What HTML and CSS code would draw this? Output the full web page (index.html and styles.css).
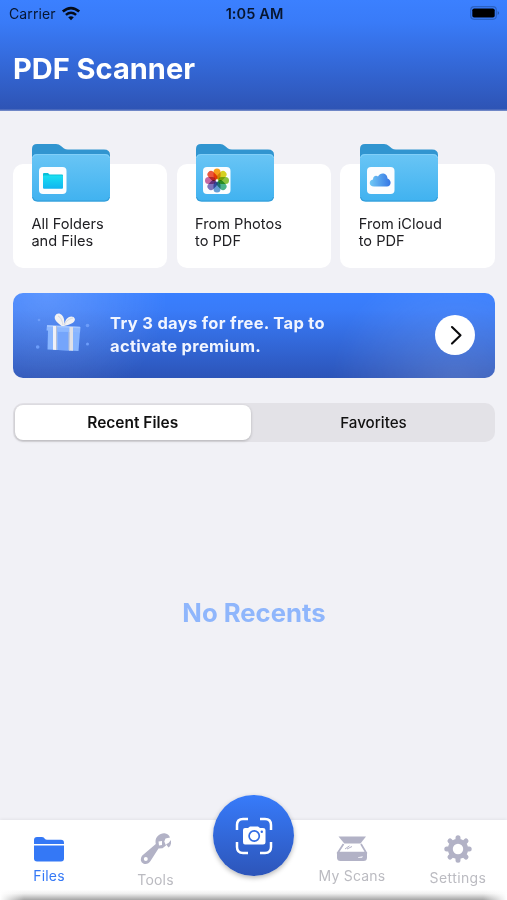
FILE: index.html
```html
<!DOCTYPE html>
<html lang="en">
    <head>
        <meta charset="UTF-8">
        <title>PDF Scanner</title>
        <link rel="stylesheet" href="styles.css">
    </head>
    <body>
        <svg class="definitions" width="0" height="0">
            <defs>
                <linearGradient id="folder-front" x1="0" y1="0" x2="0" y2="1">
                    <stop offset="0" stop-color="#69c5f5"/>
                    <stop offset="1" stop-color="#40b2f0"/>
                </linearGradient>
                <linearGradient id="small-folder" x1="0" y1="0" x2="0" y2="1">
                    <stop offset="0" stop-color="#18e0f2"/>
                    <stop offset="1" stop-color="#12b4f0"/>
                </linearGradient>
                <linearGradient id="cloud" x1="0" y1="0" x2="1" y2="0">
                    <stop offset="0" stop-color="#70c9f5"/>
                    <stop offset="1" stop-color="#3576e5"/>
                </linearGradient>
                <symbol id="folder" viewBox="0 0 80 60">
                    <path d="M1 6Q1 1 6 1H25Q28 1 30 3L33 5.500Q34.500 6.500 37 6.500H73Q79 6.500 79 12V40H1Z" fill="#3195d0"/>
                    <path d="M1 16Q1 11 6 11H74Q79 11 79 16V53Q79 58.500 73.500 58.500H6.500Q1 58.500 1 53Z" fill="url(#folder-front)"/>
                    <path d="M1.500 15Q2 11.500 6 11.500H74Q78 11.500 78.500 15" fill="none" stroke="#81cff8"/>
                    <path d="M1.500 54Q2 58 6.500 58H73.500Q78 58 78.500 54" fill="none" stroke="#359bd5"/>
                    <rect x="8" y="24" width="27.500" height="27" rx="4" fill="#fbfdff"/>
                </symbol>
            </defs>
        </svg>
        <main class="screen">
            <header class="header">
                <div class="status-bar">
                    <div class="carrier">
                        <span class="carrier-name">Carrier</span>
                        <svg class="wifi" width="20" height="15" viewBox="0 0 20 15">
                            <path d="M1.800 5.600Q10 -1.500 18.200 5.600" fill="none" stroke="#050b18" stroke-width="2.700"/>
                            <path d="M4.900 8.900Q10 4.600 15.100 8.900" fill="none" stroke="#050b18" stroke-width="2.500"/>
                            <path d="M10 14.300L7.200 11.300Q10 9.200 12.800 11.300Z" fill="#050b18"/>
                        </svg>
                    </div>
                    <div class="time">1:05 AM</div>
                    <svg class="battery" width="30" height="14" viewBox="0 0 30 14">
                        <rect x=".700" y=".700" width="25.600" height="12.600" rx="3.500" fill="none" stroke="#2b62c4" stroke-width="1.200"/>
                        <rect x="2.300" y="2.500" width="22.400" height="9" rx="1.800" fill="#000"/>
                        <path d="M27.700 5Q30.500 7 27.700 9Z" fill="#2457ac"/>
                    </svg>
                </div>
                <h1 class="title">PDF Scanner</h1>
            </header>

            <section class="cards">
                <article class="card">
                    <svg class="folder" viewBox="0 0 80 60">
                        <use href="#folder"/>
                        <path d="M12 31Q12 30 13 30H17L18.500 31.500H31Q32 31.500 32 32.500V38H12Z" fill="#09bfd9"/>
                        <rect x="12" y="32.500" width="20" height="13.300" rx="1" fill="url(#small-folder)"/>
                    </svg>
                    <p class="card-text">All Folders<br>and Files</p>
                </article>
                <article class="card">
                    <svg class="folder" viewBox="0 0 80 60">
                        <use href="#folder"/>
                        <g class="petals" transform="translate(22 37.500)">
                            <rect x="-3.500" y="-12" width="7" height="10.800" rx="3.500" fill="#f9a01c"/>
                            <rect x="-3.500" y="-12" width="7" height="10.800" rx="3.500" fill="#d9d320" transform="rotate(45)"/>
                            <rect x="-3.500" y="-12" width="7" height="10.800" rx="3.500" fill="#8bc53f" transform="rotate(90)"/>
                            <rect x="-3.500" y="-12" width="7" height="10.800" rx="3.500" fill="#4bb58a" transform="rotate(135)"/>
                            <rect x="-3.500" y="-12" width="7" height="10.800" rx="3.500" fill="#669fd5" transform="rotate(180)"/>
                            <rect x="-3.500" y="-12" width="7" height="10.800" rx="3.500" fill="#8175bd" transform="rotate(225)"/>
                            <rect x="-3.500" y="-12" width="7" height="10.800" rx="3.500" fill="#c669a3" transform="rotate(270)"/>
                            <rect x="-3.500" y="-12" width="7" height="10.800" rx="3.500" fill="#ef593e" transform="rotate(315)"/>
                        </g>
                    </svg>
                    <p class="card-text">From Photos<br>to PDF</p>
                </article>
                <article class="card">
                    <svg class="folder" viewBox="0 0 80 60">
                        <use href="#folder"/>
                        <path d="M15 43.500C9.500 43.500 9.500 37 14 36.500C14 33 17 32 19 33.500C21.500 28.500 28.500 30 28.500 35.500C33 37 32.500 43.500 28 43.500Z" fill="url(#cloud)"/>
                    </svg>
                    <p class="card-text">From iCloud<br>to PDF</p>
                </article>
            </section>

            <section class="banner">
                <svg class="gift" width="56" height="44" viewBox="0 0 56 44">
                    <g fill="#6d9dfa">
                        <circle cx="3" cy="8" r="1.300"/>
                        <circle cx="1.700" cy="35" r="1.800"/>
                        <circle cx="51.500" cy="13.500" r="1.800"/>
                        <circle cx="51.500" cy="32" r="1.500"/>
                    </g>
                    <path d="M12 18L44 19L42.500 39L11.500 37.500Z" fill="#87b5ff"/>
                    <path d="M22 20H34V38.500L22 38Z" fill="#75a5fb"/>
                    <path d="M11 13L44.500 15L44 20.500L10.500 18.500Z" fill="#8db8ff"/>
                    <path d="M11 14L44 15.500" stroke="#a5c7ff" stroke-width="1.500"/>
                    <path d="M17 14L20.500 14V38L17 37.800Z" fill="#eef0f7"/>
                    <path d="M33.500 15H37V38.800L33 38.500Z" fill="#e0e1e7"/>
                    <path d="M20.500 14V38M33 20V38" stroke="#b5bfd7" stroke-width="1"/>
                    <path d="M25.500 14C22 11 17.500 8 19 4C21.500 -1 27 2 28 7L28.500 12C29.500 6 34 3 37.500 5C42 9 35 13 28 14Z" fill="#f1f1f3"/>
                    <path d="M22 4C25 5 26.500 10 27 13M37 6C32 7 29.500 10 28.500 13" fill="none" stroke="#d5d8e0" stroke-width="1"/>
                </svg>
                <p class="banner-text">Try 3 days for free. Tap to<br>activate premium.</p>
                <div class="banner-button">
                    <svg width="40" height="40" viewBox="0 0 40 40">
                        <path d="M17 12L25.500 20.300L17 28.600" fill="none" stroke="#0b0b0d" stroke-width="2.100" stroke-linecap="round" stroke-linejoin="round"/>
                    </svg>
                </div>
            </section>

            <div class="segments">
                <div class="segment segment-active">Recent Files</div>
                <div class="segment">Favorites</div>
            </div>

            <section class="empty">No Recents</section>

            <nav class="tab-bar">
                <div class="tab tab-files tab-active">
                    <svg width="32" height="26" viewBox="0 0 32 26">
                        <path d="M1 8V4Q1 1 4 1H9Q11 1 12 3Q12.500 3.700 14 3.700H28Q31 3.700 31 7V8Z" fill="currentColor"/>
                        <path d="M1 9.500H31V22.500Q31 25.500 28 25.500H4Q1 25.500 1 22.500Z" fill="currentColor"/>
                    </svg>
                    <span>Files</span>
                </div>
                <div class="tab tab-tools">
                    <svg width="32" height="32" viewBox="0 0 32 32">
                        <path d="M2 22.800L15.800 11C14.300 5 19 0 24.500 .300Q28.500 .800 30 4.500L25.500 5.500L24.300 8.500L26 12.500L22.500 15.300L18.500 15.500L10.500 28C7 34 -2.500 30 2 22.800Z" fill="currentColor"/>
                        <path d="M31 7V10.500Q30.500 13.500 28.500 14.500L26 11.300L28.500 10Z" fill="currentColor"/>
                        <path d="M18.500 8.500L22 8V12L19 12.500Z" fill="#fff"/>
                        <circle cx="5.800" cy="26" r="2" fill="#fff"/>
                    </svg>
                    <span>Tools</span>
                </div>
                <div class="tab tab-scans">
                    <svg width="32" height="26" viewBox="0 0 32 26">
                        <path d="M2.500 .500H30L24.500 7.500H8.300Z" fill="currentColor"/>
                        <path d="M7.500 8L2 16.500H30L25 8" fill="none" stroke="currentColor" stroke-width="1.700"/>
                        <path d="M1 16.500H31V21.500Q31 25 27.500 25H4.500Q1 25 1 21.500Z" fill="currentColor"/>
                        <path d="M9 13L13.500 9.800M11 13L16 10.500" stroke="currentColor" stroke-width="1"/>
                        <path d="M22 21.200L27 20L26 22H22Z" fill="#e9e9f0"/>
                    </svg>
                    <span>My Scans</span>
                </div>
                <div class="tab tab-settings">
                    <svg width="28" height="28" viewBox="-14 -14 28 28">
                        <circle r="7.700" fill="none" stroke="currentColor" stroke-width="5"/>
                        <g stroke="currentColor" stroke-width="5" stroke-linecap="round">
                            <path d="M0 -9V-11.200M0 9V11.200M-9 0H-11.200M9 0H11.200"/>
                            <path d="M-6.500 -6.500L-8 -8M6.500 -6.500L8 -8M-6.500 6.500L-8 8M6.500 6.500L8 8"/>
                        </g>
                    </svg>
                    <span>Settings</span>
                </div>
                <div class="scan-button">
                    <svg width="38" height="38" viewBox="0 0 38 38">
                        <g fill="none" stroke="#fff" stroke-width="2.500">
                            <path d="M2 13V8Q2 2 8 2H13M25 2H30Q36 2 36 8V13M36 25V30Q36 36 30 36H25M13 36H8Q2 36 2 30V25"/>
                        </g>
                        <path d="M8 13Q8 11 10 11H13L15 9.500H23L25 11H28Q30.500 11 30.500 13V25Q30.500 27.500 28 27.500H10Q8 27.500 8 25Z" fill="#fff"/>
                        <circle cx="19.200" cy="19" r="5.100" fill="#fff" stroke="#326ce3" stroke-width="1.700"/>
                        <circle cx="26.800" cy="14.800" r="1.200" fill="#326ce3"/>
                    </svg>
                </div>
            </nav>
        </main>
    </body>
</html>
```
FILE: styles.css
```css
*
{
    box-sizing: border-box;
    margin: 0;
    padding: 0;
}

body
{
    background: #f1f1f6;
    font-family: Inter, "Liberation Sans", sans-serif;
}

svg
{
    display: block;
    flex-shrink: 0;
}

.definitions
{
    position: absolute;
}

.screen
{
    display: flex;
    flex-direction: column;
    overflow: hidden;
    height: 900px;
    width: 507px;
}

.header
{
    flex-shrink: 0;
    height: 111px;

    background: linear-gradient( #3b80ff, #397bf8 20%, #2e54b5 98%, #8295cc );
}

.status-bar
{
    display: grid;
    grid-template-columns: 1fr auto 1fr;
    align-items: center;
    height: 28px;
    padding: 0 7px 2px 9px;

    font-size: 14px;
    letter-spacing: 0.1px;
    color: #071630;
}

.carrier
{
    display: flex;
    align-items: center;
    gap: 5px;
}

.time
{
    font-size: 14.500px;
    font-weight: 600;
}

.battery
{
    justify-self: end;
}

.title
{
    padding: 23px 0 0 13px;

    font-size: 29px;
    font-weight: 700;
    line-height: 36px;
    color: #fff;
}

.cards
{
    display: grid;
    grid-template-columns: repeat( 3, 1fr );
    flex-shrink: 0;
    gap: 9.500px;
    margin: 52.500px 12.500px 0 13px;
}

.card
{
    height: 104.500px;
    padding-left: 18.400px;
    border-radius: 10px;

    background: #fff;
}

.folder
{
    height: 60px;
    width: 80px;
    margin-top: -20.500px;
}

.petals,
.petals rect
{
    mix-blend-mode: multiply;
}

.card-text
{
    margin-top: 12.800px;

    font-size: 14.600px;
    line-height: 17.500px;
    color: #202024;
}

.banner
{
    display: flex;
    align-items: center;
    flex-shrink: 0;
    height: 85.500px;
    margin: 24.500px 12.500px 0 13px;
    padding: 0 19.500px 0 23px;
    border-radius: 10px;

    background:
        radial-gradient( circle at 7% 0, rgba( 255, 255, 255, 0.18 ), transparent 120px ),
        radial-gradient( circle at 92% 110%, rgba( 255, 255, 255, 0.16 ), transparent 125px ),
        linear-gradient( #397fff, #397bf8 20%, #2c54b8 );
}

.gift
{
    margin-top: -2px;
}

.banner-text
{
    flex: 1;
    margin-left: 18px;

    font-size: 16.500px;
    font-weight: 700;
    line-height: 23px;
    letter-spacing: 0.320px;
    color: #f1f5ff;
}

.banner-button
{
    border-radius: 50%;

    background: #fff;
}

.segments
{
    display: flex;
    flex-shrink: 0;
    height: 39px;
    margin: 24.500px 12.500px 0 13px;
    padding: 2px 0 2px 2px;
    border-radius: 10px;

    background: #e3e2e7;
}

.segment
{
    display: flex;
    flex: 1;
    justify-content: center;
    align-items: center;
    padding-left: 2px;

    font-size: 15.200px;
    font-weight: 500;
    color: #111;
}

.segment-active
{
    flex: 0 0 235.500px;
    padding-left: 0;
    border-radius: 8px;

    background: #fff;
    box-shadow: 0 1px 3px rgba( 0, 0, 0, 0.22 );
    font-size: 15.500px;
    font-weight: 600;
}

.empty
{
    flex: 1;
    padding: 154px 0 0 1px;

    font-size: 25.700px;
    font-weight: 700;
    line-height: 34px;
    text-align: center;
    color: #8fb6fc;
}

.tab-bar
{
    position: relative;

    display: flex;
    align-items: flex-start;
    flex-shrink: 0;
    height: 80px;

    background: linear-gradient( #fff 0, #fff 87%, #efefef 92%, #a4a4a4 100% );
    box-shadow: 0 -1px 3px rgba( 0, 0, 0, 0.06 );
}

.tab-bar::before,
.tab-bar::after
{
    position: absolute;
    bottom: 0;

    height: 14px;
    width: 24px;

    background: linear-gradient( to right, #fff, transparent );
    content: "";
}

.tab-bar::before
{
    left: 0;
}

.tab-bar::after
{
    right: 0;
    transform: scaleX( -1 );
}

.tab
{
    display: flex;
    flex-direction: column;
    flex-shrink: 0;
    align-items: center;
    width: 98px;

    font-size: 14px;
    line-height: 18px;
    letter-spacing: 0.2px;
    color: #b2b2c6;
}

.tab span
{
    color: #bbbbc1;
}

.tab-active,
.tab-active span
{
    color: #3478f6;
}

.tab-files
{
    gap: 5px;
    padding-top: 16px;
}

.tab-tools
{
    gap: 6px;
    width: 115px;
    padding-top: 13px;
}

.tab-scans
{
    gap: 5px;
    margin-left: 90px;
    padding-top: 16px;
}

.tab-settings
{
    gap: 6px;
    width: 114px;
    padding-top: 15px;

    letter-spacing: 0.400px;
}

.scan-button
{
    position: absolute;
    top: -25px;
    left: 213px;

    display: flex;
    justify-content: center;
    align-items: center;
    height: 81px;
    width: 81px;
    border-radius: 50%;

    background: linear-gradient( #377bfa, #2d55b9 );
    box-shadow: 0 2px 5px rgba( 0, 0, 0, 0.28 );
}
```
